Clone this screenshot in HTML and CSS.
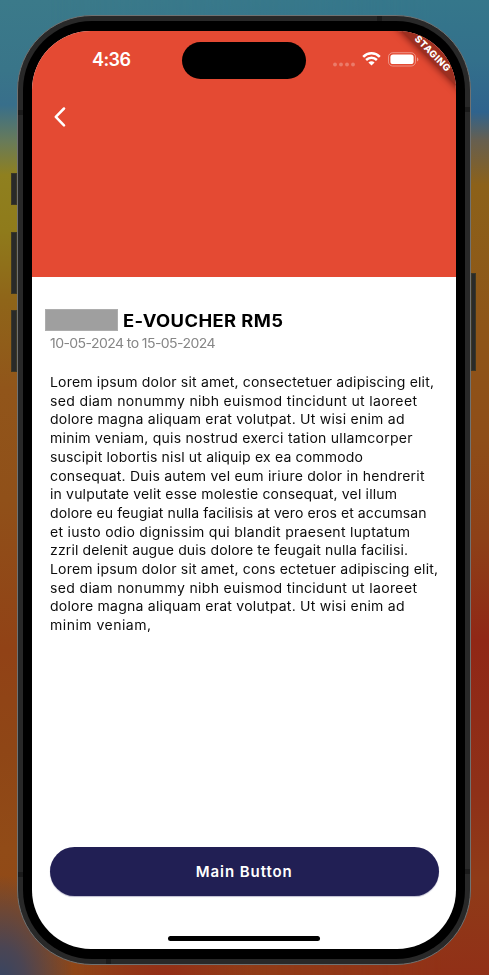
FILE: index.html
```html
<!DOCTYPE html>
<html lang="en">
<head>
<meta charset="utf-8">
<title>E-Voucher</title>
<link rel="stylesheet" href="styles.css">
</head>
<body>
<div class="phone">
  <i class="key key-action"></i><i class="key key-up"></i><i class="key key-down"></i><i class="key key-power"></i>
  <i class="seam seam-tl"></i><i class="seam seam-tr"></i><i class="seam seam-bl"></i><i class="seam seam-br"></i><i class="seam seam-top"></i><i class="seam seam-bottom"></i>
  <div class="bezel">
    <main class="screen">
      <header class="hero">
        <div class="status">
          <div class="time"><span data-width="39">4:36</span></div>
          <div class="island"></div>
          <div class="signals">
            <svg class="dots" width="22" height="5" viewBox="0 0 22 5"><circle cx="2" cy="2.5" r="1.9"/><circle cx="8" cy="2.5" r="1.9"/><circle cx="14" cy="2.5" r="1.9"/><circle cx="20" cy="2.5" r="1.9"/></svg>
            <svg class="wifi" width="19" height="14" viewBox="0 0 19 14"><path d="M1.2 4.8C5.8.2 13.2.2 17.8 4.8" /><path d="M4.1 8C7.2 5 11.8 5 14.9 8"/><path class="solid" d="M6.4 10.4C8.2 8.8 10.8 8.8 12.6 10.4L9.5 13.6Z"/></svg>
            <svg class="battery" width="31" height="15" viewBox="0 0 31 15"><rect class="case" x=".5" y=".7" width="27" height="13.3" rx="4.2"/><rect class="charge" x="2.4" y="2.6" width="23.2" height="9.5" rx="2.7"/><path class="cap" d="M29 5.2v4.4q1.4-.7 1.4-2.2T29 5.2z"/></svg>
          </div>
        </div>
        <svg class="back" width="12" height="20" viewBox="0 0 12 20"><path d="M10 1.5L1.8 9.8 10 18.3"/></svg>
      </header>
      <section class="content">
        <div class="heading"><span class="redacted"></span><h1><span class="wide" data-width="160">E-VOUCHER RM5</span></h1></div>
        <p class="dates"><span class="wide" data-width="165.5">10-05-2024 to 15-05-2024</span></p>
        <p class="copy">
          <span class="wide" data-width="384">Lorem ipsum dolor sit amet, consectetuer adipiscing elit,</span>
          <span class="wide" data-width="367">sed diam nonummy nibh euismod tincidunt ut laoreet</span>
          <span class="wide" data-width="354.5">dolore magna aliquam erat volutpat. Ut wisi enim ad</span>
          <span class="wide" data-width="362.5">minim veniam, quis nostrud exerci tation ullamcorper</span>
          <span class="wide" data-width="313">suscipit lobortis nisl ut aliquip ex ea commodo</span>
          <span class="wide" data-width="374.5">consequat. Duis autem vel eum iriure dolor in hendrerit</span>
          <span class="wide" data-width="347">in vulputate velit esse molestie consequat, vel illum</span>
          <span class="wide" data-width="376.5">dolore eu feugiat nulla facilisis at vero eros et accumsan</span>
          <span class="wide" data-width="360">et iusto odio dignissim qui blandit praesent luptatum</span>
          <span class="wide" data-width="358">zzril delenit augue duis dolore te feugait nulla facilisi.</span>
          <span class="wide" data-width="388">Lorem ipsum dolor sit amet, cons ectetuer adipiscing elit,</span>
          <span class="wide" data-width="367">sed diam nonummy nibh euismod tincidunt ut laoreet</span>
          <span class="wide" data-width="354.5">dolore magna aliquam erat volutpat. Ut wisi enim ad</span>
          <span class="wide" data-width="101">minim veniam,</span>
        </p>
      </section>
      <footer class="footer">
        <button class="main-button"><span data-width="96">Main Button</span></button>
        <div class="home-bar"></div>
      </footer>
      <div class="banner"><span data-width="46">STAGING</span></div>
    </main>
  </div>
</div>
<script src="app.js"></script>
</body>
</html>
```

FILE: styles.css
```css
* { box-sizing: border-box; margin: 0; padding: 0; }

body {
  position: relative;
  width: 489px;
  height: 975px;
  padding: 15px 18px 10px 17px;
  overflow: hidden;
  font-family: Inter, "Liberation Sans", sans-serif;
  background: linear-gradient(180deg, #3b7a8a 0, #397589 70px, #386f8b 105px, #697b58 142px, #8f801f 175px, #8f7b1b 230px, #8f6519 300px, #91551a 390px, #905019 500px, #914216 650px, #8f4616 750px, #914b17 850px, #8f4717 975px);
}

/* Right-hand side of the wallpaper, faded in across the width. */
body::before {
  content: "";
  position: absolute;
  inset: 0;
  background: linear-gradient(180deg, #35778b 0, #33708b 60px, #2f638d 112px, #665f50 140px, #8c6119 185px, #8e5518 330px, #8e4d18 440px, #8d4017 540px, #902716 640px, #8e3018 790px, #8f3b18 880px, #913017 975px);
  -webkit-mask-image: linear-gradient(90deg, transparent 50px, #000 450px);
  mask-image: linear-gradient(90deg, transparent 50px, #000 450px);
}

body::after {
  content: "";
  position: absolute;
  inset: 0;
  z-index: 0;
  background:
    radial-gradient(ellipse 75px 110px at 0 985px, #344565 0%, #4b4553 35%, transparent 100%),
    radial-gradient(ellipse 90px 40px at 165px 975px, #932d17 0%, transparent 100%);
}

.phone {
  position: relative;
  z-index: 1;
  width: 454px;
  height: 950px;
  padding: 5px;
  border: 1px solid #707272;
  border-radius: 75px;
  background: #282828;
}

.bezel {
  height: 938px;
  padding: 10px 9px;
  border-radius: 69px;
  background: #000;
}

.screen {
  position: relative;
  display: flex;
  flex-direction: column;
  width: 424px;
  height: 918px;
  overflow: hidden;
  border-radius: 59px;
  background: #fff;
}

.key { position: absolute; width: 6px; background: #292a29; border: 1px solid #3b3725; }
.key-action { left: -7px; top: 157px; height: 32px; }
.key-up { left: -7px; top: 216px; height: 62px; }
.key-down { left: -7px; top: 294px; height: 62px; }
.key-power { right: -6px; top: 257px; height: 98px; width: 5px; }

.seam { position: absolute; width: 5px; height: 5px; background: #1b1b1b; }
.seam-tl { left: 0; top: 94px; }
.seam-tr { right: 0; top: 91px; }
.seam-bl { left: 0; bottom: 87px; }
.seam-br { right: 0; bottom: 90px; }
.seam-top { left: 359px; top: 0; }
.seam-bottom { left: 88px; bottom: 0; }

.hero { height: 246.4px; background: #e44a33; color: #fff; flex: none; }
.status { display: grid; grid-template-columns: 150px 124px 1fr; height: 58px; padding-top: 11px; }
.time { padding: 6px 0 0 60px; font-size: 18px; line-height: 24px; font-weight: 600; }
.island { height: 36.5px; border-radius: 19px; background: #000; }
.signals { display: flex; align-items: flex-start; padding: 10px 0 0 27px; }
.dots { margin-top: 10px; fill: #fff; opacity: .27; }
.wifi { margin-left: 7px; fill: none; stroke: #fff; stroke-width: 2.5; }
.wifi .solid { fill: #fff; stroke: none; }
.battery { margin-left: 7px; fill: #fff; }
.battery .case { fill: none; stroke: #fff; opacity: .4; }
.battery .cap { opacity: .45; }
.back { display: block; margin: 18px 0 0 21.5px; fill: none; stroke: #fff; stroke-width: 2.5; stroke-linecap: round; stroke-linejoin: round; }

.content { padding: 32px 13px 0; flex: 1; }
.heading { display: flex; height: 22px; }
.redacted { width: 72.5px; height: 22px; background: #9f9f9f; border: 1px solid #adadad; }
h1 { margin-left: 5.5px; font-size: 17px; line-height: 24px; font-weight: 700; color: #000; }
.dates { margin: 3px 0 0 5px; font-size: 13px; line-height: 18px; color: #868686; }
.copy { margin: 20.6px 0 0 5px; font-size: 13px; line-height: 18.7px; color: #0c0c0c; }
.copy span { display: table; }
[data-width] { white-space: nowrap; }
.wide { display: inline-block; transform: scaleX(1.08); transform-origin: 0 50%; }

.footer { flex: none; padding: 0 18px 8px; }
.main-button {
  display: block;
  width: 388.5px;
  height: 49px;
  margin-bottom: 40.5px;
  border: 0;
  border-radius: 25px;
  background: #211f54;
  box-shadow: 0 1px 1px #bdbccf;
  color: #fff;
  font: 600 15px/49px Inter, sans-serif;
}
.home-bar { width: 152px; height: 5px; margin: 0 auto; border-radius: 3px; background: #000; }

.banner {
  position: absolute;
  left: 351px;
  top: 16px;
  width: 100px;
  height: 13px;
  transform: rotate(45deg);
  background: #9c2f20;
  box-shadow: 0 0 7px 1px rgba(60, 0, 0, .6);
  color: #fff;
  font-size: 9.5px;
  font-weight: 800;
  line-height: 13px;
  text-align: center;
}
```

FILE: app.js
```js
// Tracks each line of text so that it spans its intended width.
document.querySelectorAll('[data-width]').forEach((el) => {
  const target = Number(el.dataset.width);
  const rotated = el.closest('.banner');
  const scale = el.classList.contains('wide') ? 1.08 : 1;
  const range = document.createRange();
  range.selectNodeContents(el);
  const width = rotated ? el.offsetWidth : range.getBoundingClientRect().width;
  const spacing = (target - width) / scale / (el.textContent.length - 1);
  el.style.letterSpacing = spacing + 'px';
});
```
